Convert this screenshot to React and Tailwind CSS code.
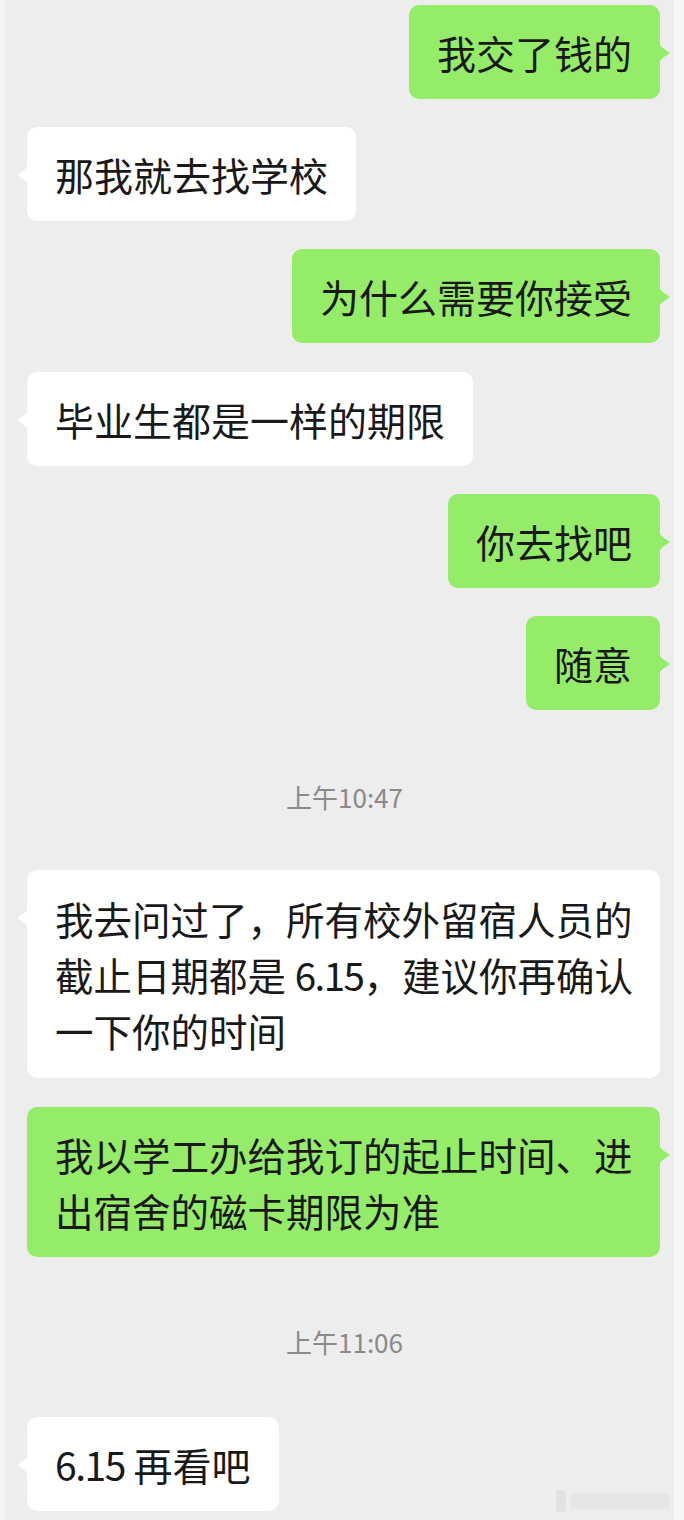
import React from "react";

const FONT = { fontFamily: '"Noto Sans CJK SC", "Noto Sans", sans-serif' };

function TailRight() {
  return (
    <svg className="absolute right-[-11px] top-[37px]" width="12" height="22" viewBox="0 0 12 22">
      <path d="M0 0 C1 4 3 6 9 9.5 Q12 11 9 12.5 C3 16 1 18 0 22 Z" fill="#95ec69" />
    </svg>
  );
}

function TailLeft() {
  return (
    <svg className="absolute left-[-11px] top-[37px]" width="12" height="22" viewBox="0 0 12 22">
      <path d="M12 0 C11 4 9 6 3 9.5 Q0 11 3 12.5 C9 16 11 18 12 22 Z" fill="#ffffff" />
    </svg>
  );
}

function Bubble({ side, lines, className = "", multi = false, pad = "py-[19px]" }) {
  const mine = side === "right";
  return (
    <div className={`flex ${mine ? "justify-end" : "justify-start"} ${className}`}>
      <div
        className={`relative rounded-[10px] px-[28px] ${pad} leading-[56px] text-[#191919] ${
          multi ? "w-full text-[38.5px]" : "text-[39px]"
        } ${mine ? "bg-[#95ec69]" : "bg-white"}`}
      >
        {mine ? <TailRight /> : <TailLeft />}
        {lines.map((l, i) => (
          <div key={i} className="whitespace-nowrap">
            {l}
          </div>
        ))}
      </div>
    </div>
  );
}

function Time({ text, className = "" }) {
  return (
    <div className={`flex justify-center ${className}`}>
      <span className="text-[26px] leading-[30px] text-[#8a8a8a] pl-[2px]">{text}</span>
    </div>
  );
}

export default function App() {
  return (
    <div className="w-[684px] h-[1520px] bg-[#f2f2f2] flex overflow-hidden" style={FONT}>
      <div className="w-[6px] bg-[#f4f4f4]" />
      <div className="relative w-[668px] bg-[#ededed] flex flex-col pt-[5px] pl-[21px] pr-[14px]">
        <Bubble side="right" lines={["我交了钱的"]} />
        <Bubble side="left" lines={["那我就去找学校"]} className="mt-[28px]" />
        <Bubble side="right" lines={["为什么需要你接受"]} className="mt-[28px]" />
        <Bubble side="left" lines={["毕业生都是一样的期限"]} className="mt-[29px]" />
        <Bubble side="right" lines={["你去找吧"]} className="mt-[28px]" />
        <Bubble side="right" lines={["随意"]} className="mt-[28px]" />
        <Time text="上午10:47" className="mt-[72px]" />
        <Bubble
          side="left"
          multi
          pad="py-[20px]"
          lines={[
            "我去问过了，所有校外留宿人员的",
            <>
              截止日期都是 <span className="tracking-[-1.5px]">6.15</span>，建议你再确认
            </>,
            "一下你的时间",
          ]}
          className="mt-[58px]"
        />
        <Bubble
          side="right"
          multi
          lines={["我以学工办给我订的起止时间、进", "出宿舍的磁卡期限为准"]}
          className="mt-[29px]"
        />
        <Time text="上午11:06" className="mt-[70px]" />
        <Bubble
          side="left"
          lines={[
            <>
              <span className="tracking-[-1.5px]">6.15</span> 再看吧
            </>,
          ]}
          className="mt-[60px]"
        />
        <div className="absolute right-[4px] bottom-[8px] flex items-center gap-[4px] opacity-60">
          <div className="w-[10px] h-[22px] rounded-[3px] bg-[#dcdcdc]" />
          <div className="w-[100px] h-[16px] rounded-[3px] bg-[#e2e2e2]" />
        </div>
      </div>
      <div className="w-[10px] bg-[#f6f6f6]" />
    </div>
  );
}
